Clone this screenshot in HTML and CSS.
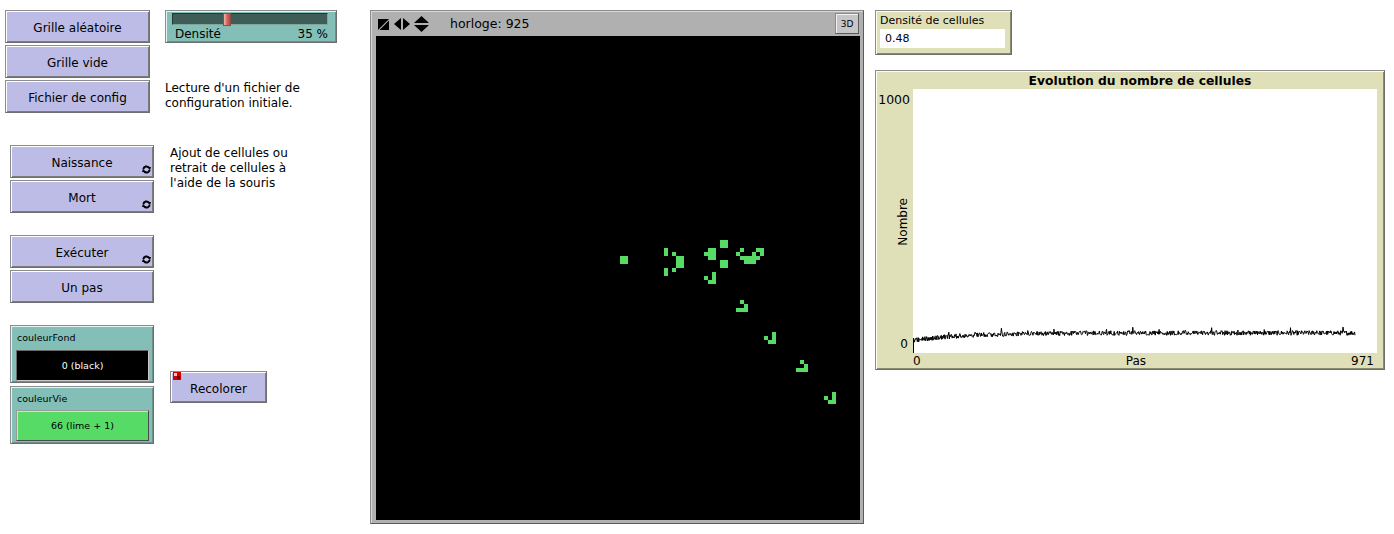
FILE: index.html
```html
<!DOCTYPE html>
<html lang="fr">
<head>
<meta charset="utf-8">
<title>Jeu de la vie</title>
<link rel="stylesheet" href="styles.css">
</head>
<body>
<div class="canvas">
  <div class="col col1">
    <div class="btn wide">Grille aléatoire</div>
    <div class="btn wide gap2">Grille vide</div>
    <div class="btn wide gap2">Fichier de config</div>

    <div class="btn narrow gap32">Naissance
      <svg class="forever" viewBox="0 0 9 9" width="9" height="9"><path d="M1.4 4.2 A3.1 3.1 0 0 1 6.9 2.6" fill="none" stroke="#000" stroke-width="2"/><polygon points="5,2 9,2 8,5.2"/><path d="M7.6 4.8 A3.1 3.1 0 0 1 2.1 6.4" fill="none" stroke="#000" stroke-width="2"/><polygon points="4,7 0,7 1,3.8"/></svg>
    </div>
    <div class="btn narrow gap2">Mort
      <svg class="forever" viewBox="0 0 9 9" width="9" height="9"><path d="M1.4 4.2 A3.1 3.1 0 0 1 6.9 2.6" fill="none" stroke="#000" stroke-width="2"/><polygon points="5,2 9,2 8,5.2"/><path d="M7.6 4.8 A3.1 3.1 0 0 1 2.1 6.4" fill="none" stroke="#000" stroke-width="2"/><polygon points="4,7 0,7 1,3.8"/></svg>
    </div>

    <div class="btn narrow gap22">Exécuter
      <svg class="forever" viewBox="0 0 9 9" width="9" height="9"><path d="M1.4 4.2 A3.1 3.1 0 0 1 6.9 2.6" fill="none" stroke="#000" stroke-width="2"/><polygon points="5,2 9,2 8,5.2"/><path d="M7.6 4.8 A3.1 3.1 0 0 1 2.1 6.4" fill="none" stroke="#000" stroke-width="2"/><polygon points="4,7 0,7 1,3.8"/></svg>
    </div>
    <div class="btn narrow gap2">Un pas</div>

    <div class="chooser gap22">
      <div class="ch-label">couleurFond</div>
      <div class="ch-value black">0 (black)</div>
    </div>
    <div class="chooser gap3">
      <div class="ch-label">couleurVie</div>
      <div class="ch-value lime">66 (lime + 1)</div>
    </div>
  </div>

  <div class="col col2">
    <div class="slider">
      <div class="track"><div class="thumb"></div></div>
      <div class="sl-row"><span>Densité</span><span>35 %</span></div>
    </div>
    <div class="note note1">Lecture d'un fichier de<br>configuration initiale.</div>
    <div class="note note2">Ajout de cellules ou<br>retrait de cellules à<br>l'aide de la souris</div>
    <div class="btn recolor">
      <svg class="once" viewBox="0 0 8 8" width="8" height="8"><rect x="0" y="0" width="8" height="8" fill="#d40000"/><rect x="1" y="1" width="3" height="3" fill="#ffd0d0"/><rect x="4" y="4" width="3" height="3" fill="#700000"/></svg>
      Recolorer
    </div>
  </div>

  <div class="view">
    <div class="vhead">
      <svg class="ic1" viewBox="0 0 11 11" width="11" height="11"><polygon points="0,0 11,0 0,11"/><polygon points="11,1.6 11,11 1.6,11"/></svg>
      <svg class="ic2" viewBox="0 0 16 12" width="16" height="12"><polygon points="7,0 7,12 0,6"/><polygon points="9,0 9,12 16,6"/></svg>
      <svg class="ic3" viewBox="0 0 15 16" width="15" height="16"><polygon points="0,7 15,7 7.5,0"/><polygon points="0,9 15,9 7.5,16"/></svg>
      <span class="ticks">horloge: 925</span>
      <div class="b3d">3D</div>
    </div>
    <div class="world">
      <svg class="cells" viewBox="0 0 121 121" width="484" height="484" shape-rendering="crispEdges">
        <rect x="61" y="55" width="2" height="2"/>
        <rect x="72" y="53" width="1" height="2"/>
        <rect x="72" y="58" width="1" height="2"/>
        <rect x="74" y="54" width="1" height="1"/>
        <rect x="74" y="58" width="1" height="1"/>
        <rect x="75" y="55" width="2" height="3"/>
        <rect x="82" y="54" width="1" height="1"/>
        <rect x="83" y="53" width="2" height="3"/>
        <rect x="86" y="51" width="2" height="2"/>
        <rect x="86" y="56" width="2" height="2"/>
        <rect x="82" y="60" width="1" height="1"/>
        <rect x="83" y="61" width="2" height="1"/>
        <rect x="84" y="59" width="1" height="2"/>
        <rect x="91" y="53" width="1" height="1"/>
        <rect x="90" y="54" width="1" height="1"/>
        <rect x="95" y="53" width="2" height="1"/>
        <rect x="96" y="54" width="1" height="1"/>
        <rect x="94" y="54" width="1" height="1"/>
        <rect x="91" y="55" width="5" height="1"/>
        <rect x="92" y="56" width="3" height="1"/>
        <rect x="91" y="66" width="1" height="1"/>
        <rect x="92" y="67" width="1" height="2"/>
        <rect x="90" y="68" width="2" height="1"/>
        <rect x="97" y="75" width="1" height="1"/>
        <rect x="99" y="74" width="1" height="3"/>
        <rect x="98" y="76" width="1" height="1"/>
        <rect x="106" y="81" width="1" height="1"/>
        <rect x="107" y="82" width="1" height="2"/>
        <rect x="105" y="83" width="2" height="1"/>
        <rect x="112" y="90" width="1" height="1"/>
        <rect x="114" y="89" width="1" height="3"/>
        <rect x="113" y="91" width="1" height="1"/>
      </svg>
    </div>
  </div>

  <div class="col col4">
    <div class="monitor">
      <div class="mon-label">Densité de cellules</div>
      <div class="mon-value">0.48</div>
    </div>
    <div class="plot">
      <div class="plot-title">Evolution du nombre de cellules</div>
      <div class="yaxis">
        <span class="ymax">1000</span>
        <span class="ylabel">Nombre</span>
        <span class="ymin">0</span>
      </div>
      <div class="plot-area">
        <svg width="464" height="264" viewBox="0 0 464 264"><polyline id="plotline" fill="none" stroke="#000" stroke-width="1" points="0,264"/></svg>
      </div>
      <div class="xaxis"><span>0</span><span>Pas</span><span>971</span></div>
    </div>
  </div>
</div>
<script src="script.js"></script>
</body>
</html>
```

FILE: styles.css
```css
body {
  margin: 0;
  background: #fff;
  font-family: "DejaVu Sans", "Noto Sans", sans-serif;
  font-size: 12px;
  color: #000;
}
.canvas {
  display: flex;
  align-items: flex-start;
}
.col {
  display: flex;
  flex-direction: column;
  align-items: flex-start;
}
.col1 {
  box-sizing: border-box;
  width: 155px;
  padding: 10px 0 0 5px;
}
.btn {
  box-sizing: border-box;
  height: 33px;
  padding-top: 3px;
  background: #bdbce6;
  border: 1px solid #8c8c8c;
  border-right-color: #6e6e6e;
  border-bottom-color: #6e6e6e;
  box-shadow: inset 1px 1px 0 #ffffff, inset -1px -1px 0 #7c7c7c;
  display: flex;
  align-items: center;
  justify-content: center;
  position: relative;
  white-space: nowrap;
}
.wide { width: 145px; }
.narrow { width: 144px; margin-left: 5px; }
.gap2 { margin-top: 2px; }
.gap3 { margin-top: 3px; }
.gap22 { margin-top: 22px; }
.gap32 { margin-top: 32px; }
.forever {
  position: absolute;
  right: 2px;
  bottom: 3px;
}
.chooser {
  box-sizing: border-box;
  width: 144px;
  height: 58px;
  margin-left: 5px;
  background: #83bfb6;
  border: 1px solid #8c8c8c;
  border-right-color: #6e6e6e;
  border-bottom-color: #6e6e6e;
  box-shadow: inset 1px 1px 0 #e6f5f2, inset -1px -1px 0 #6f8f8a;
  padding: 6px 4px 0 5px;
}
.ch-label {
  font-size: 9.5px;
  line-height: 12px;
  padding-left: 1px;
}
.ch-value {
  box-sizing: border-box;
  margin-top: 6px;
  height: 31px;
  display: flex;
  align-items: center;
  justify-content: center;
  font-size: 9.5px;
  padding-bottom: 1px;
}
.ch-value.black {
  background: #000;
  color: #fff;
  border: 1px solid #6a6a6a;
  border-right-color: #c9c9c9;
  border-bottom-color: #c9c9c9;
}
.ch-value.lime {
  margin-top: 5px;
  height: 31px;
  background: #57db67;
  border: 1px solid #9a9a9a;
  border-right-color: #4a4a4a;
  border-bottom-color: #4a4a4a;
  box-shadow: inset 1px 1px 0 #b4f3bb;
}

.col2 {
  width: 172px;
  margin-left: 10px;
  padding-top: 10px;
}
.slider {
  box-sizing: border-box;
  width: 172px;
  height: 33px;
  background: #83bfb6;
  border: 1px solid #8c8c8c;
  border-right-color: #6e6e6e;
  border-bottom-color: #6e6e6e;
  box-shadow: inset 1px 1px 0 #e6f5f2, inset -1px -1px 0 #6f8f8a;
  padding: 2px 8px 0 6px;
}
.track {
  position: relative;
  box-sizing: border-box;
  height: 12px;
  background: #3f5d57;
  border: 1px solid #233833;
  border-right-color: #7fa59e;
  border-bottom-color: #7fa59e;
}
.thumb {
  position: absolute;
  left: 50px;
  top: -1px;
  width: 8px;
  height: 13px;
  box-sizing: border-box;
  background: linear-gradient(to right, #f4b4ac, #d2635b 55%, #b9483f);
  border: 1px solid #8e4b46;
}
.sl-row {
  display: flex;
  justify-content: space-between;
  padding: 0 0 0 3px;
  line-height: 16px;
  margin-top: 1px;
}
.note {
  line-height: 15px;
  white-space: nowrap;
}
.note1 { margin-top: 38px; }
.note2 { margin-top: 35px; margin-left: 5px; }
.recolor {
  width: 97px;
  height: 32px;
  margin-top: 180px;
  margin-left: 5px;
  padding-top: 4px;
}
.once {
  position: absolute;
  left: 2px;
  top: 0px;
}

.view {
  box-sizing: border-box;
  width: 494px;
  height: 514px;
  margin: 10px 0 0 33px;
  background: #b0b0b0;
  border: 1px solid #8a8a8a;
  border-right-color: #5a5a5a;
  border-bottom-color: #5a5a5a;
  box-shadow: inset 1px 1px 0 #d8d8d8;
}
.vhead {
  height: 25px;
  display: flex;
  align-items: center;
  padding-left: 7px;
  padding-right: 4px;
}
.vhead svg { display: block; fill: #000; }
.ic1 { margin-right: 5px; margin-top: 1px; }
.ic2 { margin-right: 4px; }
.ic3 { margin-right: 21px; }
.ticks { font-size: 12.5px; }
.b3d {
  margin-left: auto;
  box-sizing: border-box;
  width: 24px;
  height: 21px;
  display: flex;
  align-items: center;
  justify-content: center;
  font-size: 9px;
  background: #c6c6c6;
  border: 1px solid #8a8a8a;
  border-right-color: #5a5a5a;
  border-bottom-color: #5a5a5a;
  box-shadow: inset 1px 1px 0 #f2f2f2;
}
.world {
  width: 484px;
  height: 484px;
  margin-left: 5px;
  background: #000;
}
.cells { display: block; }
.cells rect { fill: #57db67; }

.col4 {
  margin-left: 11px;
  padding-top: 10px;
}
.monitor {
  box-sizing: border-box;
  width: 137px;
  height: 45px;
  background: #e0e0b8;
  border: 1px solid #8c8c8c;
  border-right-color: #6e6e6e;
  border-bottom-color: #6e6e6e;
  box-shadow: inset 1px 1px 0 #fbfbef, inset -1px -1px 0 #8a8a70;
  padding: 3px 0 0 4px;
}
.mon-label {
  font-size: 11px;
  line-height: 13px;
}
.mon-value {
  margin-top: 2px;
  width: 125px;
  height: 19px;
  background: #fff;
  font-size: 11px;
  line-height: 19px;
  padding-left: 5px;
  box-sizing: border-box;
}
.plot {
  box-sizing: border-box;
  width: 510px;
  height: 300px;
  margin-top: 15px;
  background: #e0e0b8;
  border: 1px solid #8c8c8c;
  border-right-color: #6e6e6e;
  border-bottom-color: #6e6e6e;
  box-shadow: inset 1px 1px 0 #fbfbef, inset -1px -1px 0 #8a8a70;
  display: grid;
  grid-template-columns: 37px 464px 1fr;
  grid-template-rows: 18px 264px 1fr;
}
.plot-title {
  grid-column: 1 / -1;
  text-align: center;
  font-weight: bold;
  font-size: 12.3px;
  line-height: 18px;
  padding-left: 20px;
  padding-top: 1px;
}
.yaxis {
  grid-row: 2;
  grid-column: 1;
  display: flex;
  flex-direction: column;
  justify-content: space-between;
  align-items: flex-end;
  line-height: 13px;
  padding: 4px 0 2px;
}
.ymax { padding-right: 3px; font-size: 12.5px; }
.ylabel {
  writing-mode: vertical-rl;
  transform: rotate(180deg);
  margin-right: 3px;
}
.ymin { padding-right: 5px; }
.plot-area {
  grid-row: 2;
  grid-column: 2;
  background: #fff;
}
.plot-area svg { display: block; }
.xaxis {
  grid-row: 3;
  grid-column: 2;
  display: flex;
  justify-content: space-between;
  padding-right: 3px;
  line-height: 16px;
}
```

FILE: script.js
```javascript
(function () {
  var line = document.getElementById('plotline');
  var seed = 20240607;
  function rnd() {
    seed = (seed * 1103515245 + 12345) % 2147483648;
    return seed / 2147483648;
  }
  var W = 464, H = 264, maxX = 971, maxY = 1000;
  var pts = ['0.5,' + H];
  for (var s = 1; s <= 925; s++) {
    var base = 76 - 28 * Math.exp(-s / 110);
    var v = base + (rnd() - 0.5) * 18;
    if (s % 55 === 20) v += 16;
    var x = s * W / maxX;
    var y = H - v * H / maxY;
    pts.push(x.toFixed(2) + ',' + y.toFixed(2));
  }
  line.setAttribute('points', pts.join(' '));
})();
```
